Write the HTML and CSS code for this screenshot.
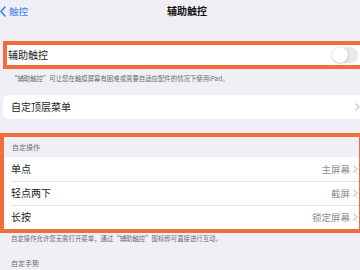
FILE: index.html
```html
<!DOCTYPE html>
<html lang="zh-CN">
<head>
<meta charset="utf-8">
<title>辅助触控</title>
<link rel="stylesheet" href="styles.css">
</head>
<body>
<div class="page">
  <header class="nav">
    <a class="back">
      <svg class="back-icon" width="6" height="11" viewBox="0 0 6 11"><path d="M5 1L1 5.5L5 10" fill="none" stroke="#3a82f7" stroke-width="1.6" stroke-linecap="round" stroke-linejoin="round"/></svg>
      <span>触控</span>
    </a>
    <h1 class="title">辅助触控</h1>
  </header>

  <section class="hl hl-main">
    <div class="row row-toggle">
      <span class="label">辅助触控</span>
      <span class="switch"><span class="knob"></span></span>
    </div>
  </section>
  <p class="note note-1">“辅助触控”可让您在触摸屏幕有困难或需要自适应配件的情况下使用iPad。</p>

  <div class="card row">
    <span class="label">自定顶层菜单</span>
    <svg class="chev" width="5" height="8" viewBox="0 0 5 8"><path d="M1 1l3 3-3 3" fill="none" stroke="#c7c7cc" stroke-width="1.2" stroke-linecap="round" stroke-linejoin="round"/></svg>
  </div>

  <section class="hl hl-actions">
    <h2 class="group-title">自定操作</h2>
    <ul class="list">
      <li class="row item">
        <span class="label">单点</span>
        <span class="value">主屏幕</span>
        <svg class="chev" width="5" height="8" viewBox="0 0 5 8"><path d="M1 1l3 3-3 3" fill="none" stroke="#c7c7cc" stroke-width="1.2" stroke-linecap="round" stroke-linejoin="round"/></svg>
      </li>
      <li class="row item">
        <span class="label">轻点两下</span>
        <span class="value">截屏</span>
        <svg class="chev" width="5" height="8" viewBox="0 0 5 8"><path d="M1 1l3 3-3 3" fill="none" stroke="#c7c7cc" stroke-width="1.2" stroke-linecap="round" stroke-linejoin="round"/></svg>
      </li>
      <li class="row item">
        <span class="label">长按</span>
        <span class="value">锁定屏幕</span>
        <svg class="chev" width="5" height="8" viewBox="0 0 5 8"><path d="M1 1l3 3-3 3" fill="none" stroke="#c7c7cc" stroke-width="1.2" stroke-linecap="round" stroke-linejoin="round"/></svg>
      </li>
    </ul>
  </section>
  <p class="note note-2">自定操作允许您无需打开菜单，通过“辅助触控”图标即可直接进行互动。</p>
  <h2 class="group-title group-gestures">自定手势</h2>
</div>
</body>
</html>
```

FILE: styles.css
```css
html, body {
  margin: 0;
  padding: 0;
}
body {
  width: 360px;
  height: 270px;
  overflow: hidden;
  background: #f0eff5;
  font-family: "Noto Sans CJK SC", "Noto Sans", sans-serif;
  color: #1c1c1e;
}
.page {
  width: 372px;
}
.nav {
  display: flex;
  align-items: center;
  height: 22px;
}
.back {
  display: flex;
  align-items: center;
  gap: 3px;
  width: 167px;
  color: #3a82f7;
  font-size: 9.5px;
  line-height: 12px;
}
.back-icon {
  display: block;
}
.title {
  margin: 0;
  font-size: 10px;
  font-weight: 700;
  line-height: 12px;
  color: #111;
}
.hl {
  border: 4px solid #f26d3d;
}
.hl-main {
  margin: 19px 0 0 3px;
  background: #fff;
}
.row {
  display: flex;
  align-items: center;
  background: #fff;
}
.label {
  flex: 1;
  font-size: 10px;
  line-height: 12px;
}
.row-toggle {
  height: 20px;
  padding: 0 10px 0 1px;
}
.switch {
  display: block;
  width: 26px;
  height: 16px;
  border-radius: 8px;
  background: #e9e9eb;
  position: relative;
}
.knob {
  position: absolute;
  left: 0;
  top: 0;
  width: 16px;
  height: 16px;
  border-radius: 50%;
  background: #fff;
  box-shadow: 0 0.5px 2px rgba(0,0,0,0.25), 0 0 0 0.5px rgba(0,0,0,0.05);
}
.note {
  margin: 0;
  padding-left: 11px;
  font-size: 6.4px;
  line-height: 12px;
  color: #6d6d72;
  white-space: nowrap;
}
.note-1 {
  margin-top: 4px;
}
.card {
  margin: 10px 0 0 3px;
  height: 24px;
  padding: 0 12px 0 8px;
  border-radius: 6px 0 0 6px;
}
.chev {
  display: block;
  flex: none;
}
.hl-actions {
  margin-top: 14px;
  width: 355px;
}
.group-title {
  margin: 0;
  padding-left: 8px;
  height: 20px;
  display: flex;
  align-items: center;
  font-size: 7px;
  font-weight: 400;
  color: #6d6d72;
}
.list {
  list-style: none;
  margin: 0;
  padding: 0;
}
.item {
  height: 24px;
  padding: 0 1px 0 7px;
  gap: 3px;
  position: relative;
}
.item + .item::before {
  content: "";
  position: absolute;
  left: 7px;
  right: 0;
  top: 0;
  height: 1px;
  background: #e5e5ea;
}
.value {
  font-size: 9.5px;
  line-height: 12px;
  color: #8e8e93;
}
.note-2 {
  margin-top: 0;
}
.group-gestures {
  margin-top: 12px;
  padding-left: 11px;
  height: 12px;
}
```
